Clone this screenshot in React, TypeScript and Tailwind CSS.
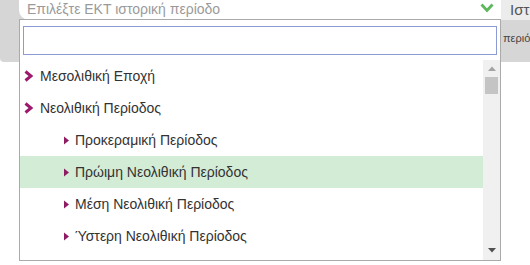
import { useState } from 'react';

const options = [
  { label: 'Μεσολιθική Εποχή', level: 1 },
  { label: 'Νεολιθική Περίοδος', level: 1 },
  { label: 'Προκεραμική Περίοδος', level: 2 },
  { label: 'Πρώιμη Νεολιθική Περίοδος', level: 2 },
  { label: 'Μέση Νεολιθική Περίοδος', level: 2 },
  { label: 'Ύστερη Νεολιθική Περίοδος', level: 2 },
];

function Chevron() {
  return (
    <svg width="9" height="12" viewBox="0 0 9 12" className="shrink-0">
      <polyline points="1.5,1.5 7,6 1.5,10.5" fill="none" stroke="#9c1a6c" strokeWidth="3" />
    </svg>
  );
}

function Caret() {
  return (
    <svg width="5" height="9" viewBox="0 0 5 9" className="shrink-0">
      <polygon points="0,0.5 5,4.5 0,8.5" fill="#8e1c62" />
    </svg>
  );
}

export default function App() {
  const [query, setQuery] = useState('');
  const [active, setActive] = useState(3);

  return (
    <div className="relative w-[530px] h-[265px] overflow-hidden bg-white font-['Liberation_Sans',Arial,sans-serif] text-[#333]">
      {/* page band behind the select */}
      <div className="flex h-[62px] bg-[#d6d6d6] rounded-bl-[4px]">
        <div className="w-[19px] shrink-0" />
        <div className="w-[482px] shrink-0">
          <div className="-mt-[11px] h-[31px] bg-white rounded-l-[10px] flex items-end justify-between pl-[8px] pr-[7px] pb-[2px]">
            <span className="text-[14px] leading-[18px] text-[#9a9a9a]">Επιλέξτε ΕΚΤ ιστορική περίοδο</span>
            <svg width="14" height="10" viewBox="0 0 14 10" className="mb-[5px]">
              <polyline points="1.5,1.5 7,7.5 12.5,1.5" fill="none" stroke="#5cb85c" strokeWidth="2.8" />
            </svg>
          </div>
        </div>
        <div className="flex-1 flex flex-col overflow-hidden">
          <div className="h-[20px] bg-[#ececec] pl-[9px] text-[15px] leading-[20px] text-[#555] whitespace-nowrap">Ιστ</div>
          <div className="flex-1 pt-[10px] pl-[2px] text-[11px] text-[#444] whitespace-nowrap">
            περιό
          </div>
        </div>
      </div>

      {/* open dropdown */}
      <div className="absolute left-[19px] top-[19px] w-[482px] h-[242px] border border-[#aaa] bg-white flex flex-col">
        <div className="pt-[6px] pb-[5px] pl-[3px] pr-[3px]">
          <input
            value={query}
            onChange={e => setQuery(e.target.value)}
            className="block w-full h-[29px] border border-[#8c9bd6] px-[4px] text-[14px] outline-none"
          />
        </div>
        <div className="flex h-[200px]">
          <div className="flex-1 overflow-hidden">
            {options.map((o, i) => (
              <div
                key={o.label}
                onMouseEnter={() => setActive(i)}
                className={`h-[32px] flex items-center text-[14px] whitespace-nowrap ${o.level === 1 ? 'pl-[4px] gap-[7px]' : 'pl-[44px] gap-[6px]'} ${active === i ? 'bg-[#d3ecd6]' : ''}`}
              >
                {o.level === 1 ? <Chevron /> : <Caret />}
                <span>{o.label}</span>
              </div>
            ))}
          </div>
          <div className="w-[17px] shrink-0 bg-[#f0f0f0] flex flex-col items-center">
            <svg width="8" height="5" viewBox="0 0 8 5" className="mt-[6px]">
              <polygon points="0,5 4,0.5 8,5" fill="#a3a3a3" />
            </svg>
            <div className="mt-[6px] w-[13px] h-[17px] bg-[#c4c4c4]" />
            <div className="flex-1" />
            <svg width="8" height="5" viewBox="0 0 8 5" className="mb-[7px]">
              <polygon points="0,0 8,0 4,4.5" fill="#505050" />
            </svg>
          </div>
        </div>
      </div>
    </div>
  );
}
